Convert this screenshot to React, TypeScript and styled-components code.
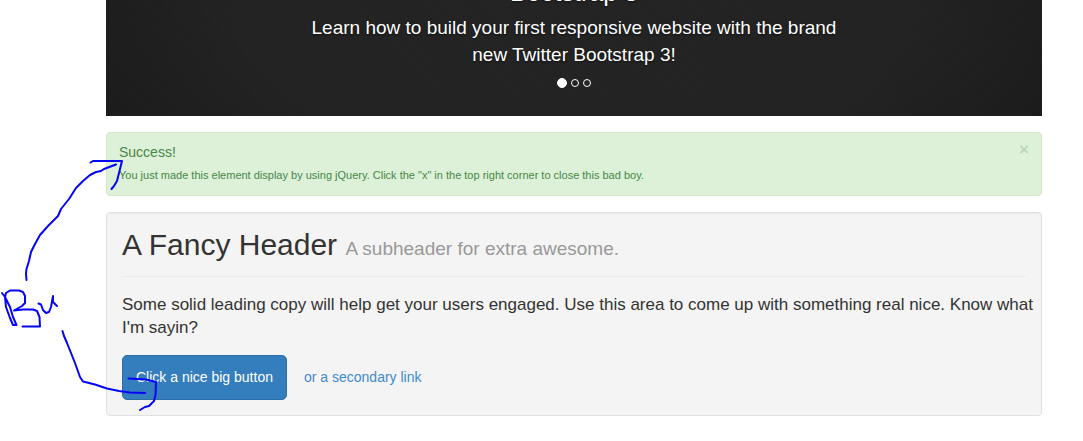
import React from 'react';
import styled, { createGlobalStyle } from 'styled-components';

const GlobalStyle = createGlobalStyle`
  * { box-sizing: border-box; }
  body {
    margin: 0;
    background: #fff;
    color: #333;
    font-family: "Liberation Sans", Arial, sans-serif;
    font-size: 14px;
    line-height: 20px;
  }
`;

const Page = styled.div`
  position: relative;
  display: flex;
  flex-direction: column;
  gap: 16px;
  padding: 0 41px 24px 106px;
  overflow: hidden;
`;

const Carousel = styled.section`
  display: flex;
  flex-direction: column;
  align-items: center;
  padding-bottom: 28px;
  overflow: hidden;
  color: #fff;
  text-align: center;
  text-shadow: 0 1px 2px rgba(0, 0, 0, 0.6);
  background:
    repeating-linear-gradient(45deg, rgba(255, 255, 255, 0.012) 0 1px, transparent 1px 3px),
    radial-gradient(ellipse 60% 250% at 50% 0, #232323 0%, #222 60%, #191919 100%);
`;

const SlideTitle = styled.h2`
  margin: -22px 0 8px;
  font-size: 25px;
  font-weight: 400;
  line-height: 28px;
`;

const SlideText = styled.p`
  margin: 0;
  max-width: 560px;
  font-size: 19px;
  line-height: 27px;
`;

const Indicators = styled.div`
  display: flex;
  align-items: center;
  gap: 4px;
  height: 10px;
  margin-top: 10px;
`;

const Indicator = styled.button<{ $active?: boolean }>`
  width: ${(p) => (p.$active ? 10 : 8)}px;
  height: ${(p) => (p.$active ? 10 : 8)}px;
  padding: 0;
  border: 1px solid #fff;
  border-radius: 50%;
  background: ${(p) => (p.$active ? '#fff' : 'transparent')};
`;

const Alert = styled.div`
  display: flex;
  justify-content: space-between;
  align-items: flex-start;
  padding: 9px 12px 11px;
  border: 1px solid #d0e9c6;
  border-radius: 4px;
  background: #ddf0d8;
  color: #468847;
`;

const AlertTitle = styled.h4`
  margin: 0 0 4px;
  font-size: 14px;
  font-weight: 400;
  line-height: 20px;
`;

const AlertText = styled.p`
  margin: 0;
  font-size: 11px;
  line-height: 18px;
`;

const Close = styled.button`
  padding: 0;
  border: 0;
  background: none;
  color: #bbd7b8;
  font: 700 17px/16px "Liberation Sans", Arial, sans-serif;
`;

const Well = styled.section`
  padding: 15px;
  border: 1px solid #e1e1e1;
  border-radius: 4px;
  background: #f4f4f4;
  box-shadow: inset 0 1px 1px rgba(0, 0, 0, 0.05);
`;

const Title = styled.h1`
  margin: 0 0 16px;
  padding-bottom: 10px;
  border-bottom: 1px solid #ebebeb;
  font-size: 30px;
  font-weight: 400;
  line-height: 34px;
`;

const Subtitle = styled.small`
  color: #999;
  font-size: 19px;
`;

const Lead = styled.p`
  margin: 0 -12px 16px 0;
  font-size: 17px;
  line-height: 23px;
`;

const Actions = styled.div`
  display: flex;
  align-items: baseline;
  gap: 17px;
`;

const PrimaryButton = styled.button`
  padding: 12px 13px;
  border: 1px solid #2c6ea9;
  border-radius: 5px;
  background: #357ebd;
  color: #fff;
  font: 14px/19px "Liberation Sans", Arial, sans-serif;
`;

const SecondaryLink = styled.a`
  color: #428bca;
  text-decoration: none;
`;

const Ink = styled.svg`
  position: absolute;
  top: 0;
  left: 0;
  pointer-events: none;
  fill: none;
  stroke: #0505f5;
  stroke-width: 2;
  stroke-linecap: round;
  stroke-linejoin: round;
`;

function Annotation() {
  return (
    <Ink width="200" height="441" viewBox="0 0 200 441" aria-hidden="true">
      <path d="M26.500 280 L26 274 L26.500 269 L29 261 L31 252 L35 244 L40 235 L48 226 L58 216 L61 209 L69 199 L76 188 L83 181 L90 175 L96 172 L101 171 L104 169 L116 164.500" />
      <path d="M90.500 162.500 L93 161 H122 L120 169 L117 181 L114 186 L111.500 189" />
      <path d="M2 293 L5 297 L10 307 L13 317 L16.500 325 L13 325 L10 318 L6 307 L5 297 L6 293 L10 290.500 H19 L23 292 L25 296 V303 L22 306 L14 310.500 L23 309.500 H33 L37 311 L39.500 317 L40 326.500 H22.500" />
      <path d="M38.500 303.500 L41 304.500 L43 310 L46 313 L49 312 L51 307 L53 296 L53 302 L57 306" />
      <path d="M62.500 331 L64 336 L67 343 L75 363 L80 377 L83 381.500 L95 384.500 L107 388.500 L119 391 L130 392.500 L145 393" />
      <path d="M128.500 378.500 L146 379.500 L152 381 L156 382 L155.500 395 L154 401 L149 406 L145 407 L140 410" />
    </Ink>
  );
}

export default function App() {
  return (
    <>
      <GlobalStyle />
      <Page>
        <Carousel>
          <SlideTitle>Bootstrap 3</SlideTitle>
          <SlideText>
            Learn how to build your first responsive website with the brand new Twitter Bootstrap 3!
          </SlideText>
          <Indicators>
            <Indicator $active aria-label="Slide 1" />
            <Indicator aria-label="Slide 2" />
            <Indicator aria-label="Slide 3" />
          </Indicators>
        </Carousel>
        <Alert role="alert">
          <div>
            <AlertTitle>Success!</AlertTitle>
            <AlertText>
              You just made this element display by using jQuery. Click the "x" in the top right corner to close this bad boy.
            </AlertText>
          </div>
          <Close aria-label="Close">×</Close>
        </Alert>
        <Well>
          <Title>
            A Fancy Header <Subtitle>A subheader for extra awesome.</Subtitle>
          </Title>
          <Lead>
            Some solid leading copy will help get your users engaged. Use this area to come up with something real nice. Know what I'm sayin?
          </Lead>
          <Actions>
            <PrimaryButton>Click a nice big button</PrimaryButton>
            <SecondaryLink href="#">or a secondary link</SecondaryLink>
          </Actions>
        </Well>
        <Annotation />
      </Page>
    </>
  );
}
